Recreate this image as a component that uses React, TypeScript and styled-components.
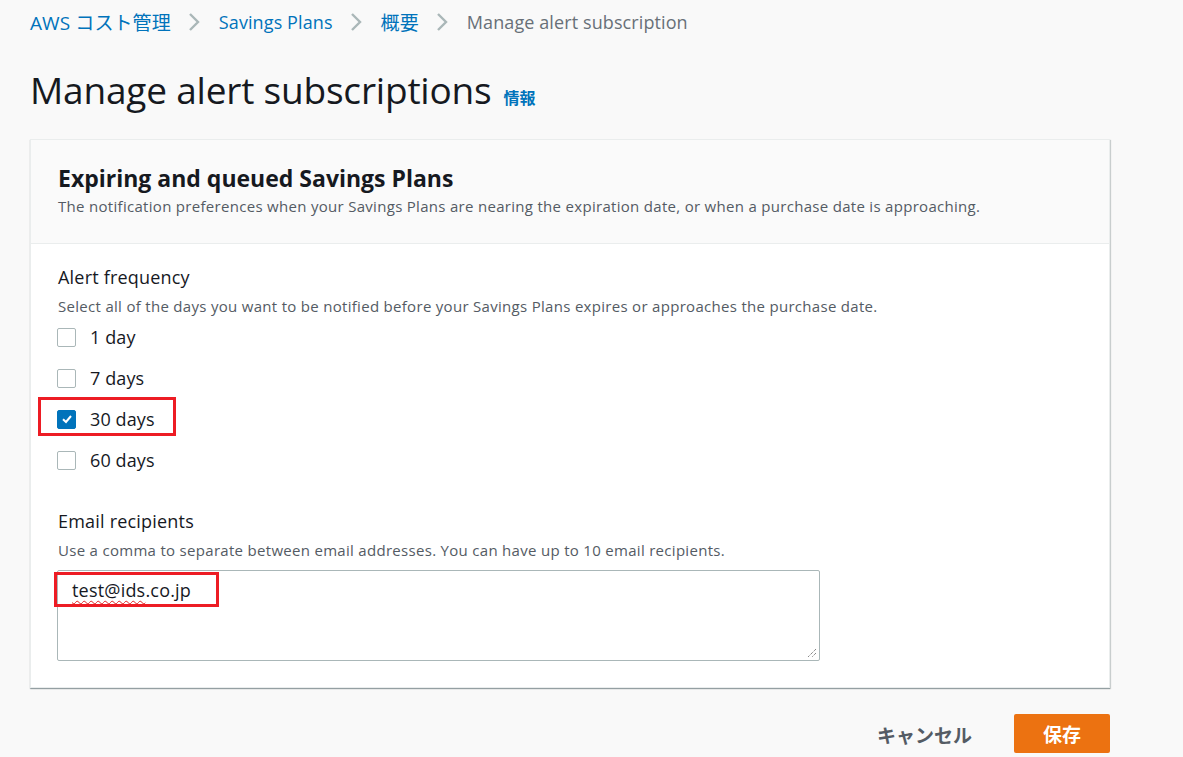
import React from "react";
import styled, { createGlobalStyle } from "styled-components";

const Global = createGlobalStyle`
  html, body { margin: 0; padding: 0; background: #f9f9f9; }
  body { font-family: "Open Sans", "Noto Sans CJK JP", sans-serif; color: #16191f; }
`;

const Page = styled.div`
  width: 1183px;
  height: 757px;
  box-sizing: border-box;
  padding: 0 73px 0 30px;
  display: flex;
  flex-direction: column;
  overflow: hidden;
`;

const Breadcrumbs = styled.nav`
  display: flex;
  align-items: center;
  height: 44px;
  font-size: 18px;
  letter-spacing: 0.1px;
`;

const Crumb = styled.span<{ $current?: boolean; $jp?: boolean }>`
  color: ${(p) => (p.$current ? "#687078" : "#0073bb")};
  font-size: ${(p) => (p.$jp ? "19px" : "18px")};
`;

const Chevron = styled.span`
  display: flex;
  align-items: center;
  margin: 0 19px 0 17px;
  color: #aab7b8;
`;

const TitleRow = styled.div`
  display: flex;
  align-items: baseline;
  margin-top: 20px;
  height: 52px;
`;

const Title = styled.h1`
  margin: 0;
  font-size: 37px;
  font-weight: 400;
  line-height: 52px;
  color: #16191f;
  letter-spacing: -0.2px;
`;

const Info = styled.a`
  margin-left: 12px;
  font-size: 16px;
  font-weight: 700;
  color: #0073bb;
  font-family: "Noto Sans CJK JP", sans-serif;
`;

const Card = styled.section`
  margin-top: 23px;
  background: #fff;
  border: 1px solid #eaeded;
  box-shadow: 0 1px 1px 0 rgba(0, 28, 36, 0.3), 1px 1px 1px 0 rgba(0, 28, 36, 0.15);
  height: 549px;
  box-sizing: border-box;
  display: flex;
  flex-direction: column;
`;

const CardHeader = styled.header`
  background: #fafafa;
  border-bottom: 1px solid #eaeded;
  padding: 23px 27px 0 27px;
  height: 104px;
  box-sizing: border-box;
`;

const CardTitle = styled.h2`
  margin: 0;
  font-size: 23px;
  font-weight: 700;
  line-height: 30px;
  color: #16191f;
`;

const Desc = styled.p`
  margin: 0;
  font-size: 15px;
  letter-spacing: 0.3px;
  line-height: 22px;
  color: #545b64;
`;

const HeaderDesc = styled(Desc)`
  margin-top: 2px;
`;

const CardBody = styled.div`
  padding: 21px 27px 0 27px;
  display: flex;
  flex-direction: column;
`;

const Label = styled.div`
  font-size: 18px;
  letter-spacing: 0.2px;
  line-height: 24px;
  color: #16191f;
`;

const Field = styled.div<{ $gap?: number }>`
  display: flex;
  flex-direction: column;
  margin-top: ${(p) => p.$gap ?? 0}px;
`;

const FieldDesc = styled(Desc)`
  margin-top: 6px;
`;

const CheckList = styled.div`
  display: flex;
  flex-direction: column;
  margin-top: 9px;
  gap: 19px;
`;

const CheckRow = styled.label`
  position: relative;
  display: flex;
  align-items: center;
  gap: 14px;
  height: 22px;
  font-size: 18px;
  letter-spacing: 0.1px;
  color: #16191f;
`;

const Box = styled.span<{ $checked?: boolean }>`
  width: 17px;
  height: 17px;
  margin-left: -1px;
  border-radius: 2px;
  border: 1px solid ${(p) => (p.$checked ? "#0073bb" : "#aab7b8")};
  background: ${(p) => (p.$checked ? "#0073bb" : "#fff")};
  display: flex;
  align-items: center;
  justify-content: center;
`;

const Highlight = styled.span`
  position: absolute;
  border: 3px solid #ed1c24;
  box-sizing: border-box;
  pointer-events: none;
`;

const TextArea = styled.div`
  position: relative;
  margin-top: 9px;
  width: 763px;
  height: 91px;
  margin-left: -1px;
  box-sizing: border-box;
  border: 1px solid #aab7b8;
  border-radius: 2px;
  background: #fff;
  padding: 7px 14px;
  font-size: 18px;
  letter-spacing: 0.2px;
  line-height: 24px;
  color: #16191f;
`;

const Squiggle = styled.span`
  text-decoration: underline wavy #e02020;
  text-decoration-thickness: 1px;
  text-underline-offset: 3px;
`;

const Grip = styled.svg`
  position: absolute;
  right: 2px;
  bottom: 2px;
`;

const Footer = styled.div`
  display: flex;
  justify-content: flex-end;
  align-items: center;
  margin-top: 26px;
  gap: 42px;
`;

const CancelButton = styled.button`
  background: none;
  border: none;
  font-family: "Noto Sans CJK JP", sans-serif;
  font-weight: 700;
  font-size: 19px;
  color: #545b64;
  padding: 0;
  margin-top: 2px;
`;

const PrimaryButton = styled.button`
  width: 96px;
  height: 39px;
  background: #ec7211;
  border: none;
  border-radius: 2px;
  color: #fff;
  font-family: "Noto Sans CJK JP", sans-serif;
  font-weight: 700;
  font-size: 19px;
`;

const ChevronIcon = () => (
  <svg width="12" height="20" viewBox="0 0 12 20">
    <path d="M2 2 L10 10 L2 18" fill="none" stroke="currentColor" strokeWidth="2.4" />
  </svg>
);

const days = [
  { label: "1 day", checked: false },
  { label: "7 days", checked: false },
  { label: "30 days", checked: true },
  { label: "60 days", checked: false },
];

export default function App() {
  return (
    <>
      <Global />
      <Page>
        <Breadcrumbs>
          <Crumb $jp>AWS コスト管理</Crumb>
          <Chevron><ChevronIcon /></Chevron>
          <Crumb>Savings Plans</Crumb>
          <Chevron><ChevronIcon /></Chevron>
          <Crumb $jp>概要</Crumb>
          <Chevron><ChevronIcon /></Chevron>
          <Crumb $current>Manage alert subscription</Crumb>
        </Breadcrumbs>
        <TitleRow>
          <Title>Manage alert subscriptions</Title>
          <Info>情報</Info>
        </TitleRow>
        <Card>
          <CardHeader>
            <CardTitle>Expiring and queued Savings Plans</CardTitle>
            <HeaderDesc>
              The notification preferences when your Savings Plans are nearing the expiration date, or when a purchase date is approaching.
            </HeaderDesc>
          </CardHeader>
          <CardBody>
            <Field>
              <Label>Alert frequency</Label>
              <FieldDesc>
                Select all of the days you want to be notified before your Savings Plans expires or approaches the purchase date.
              </FieldDesc>
              <CheckList>
                {days.map((d) => (
                  <CheckRow key={d.label}>
                    <Box $checked={d.checked}>
                      {d.checked && (
                        <svg width="12" height="12" viewBox="0 0 12 12">
                          <path d="M2 6.2 L5 9 L10 3" fill="none" stroke="#fff" strokeWidth="2" />
                        </svg>
                      )}
                    </Box>
                    {d.label}
                    {d.checked && (
                      <Highlight style={{ left: -20, top: -11, width: 138, height: 39 }} />
                    )}
                  </CheckRow>
                ))}
              </CheckList>
            </Field>
            <Field $gap={38}>
              <Label>Email recipients</Label>
              <FieldDesc>
                Use a comma to separate between email addresses. You can have up to 10 email recipients.
              </FieldDesc>
              <TextArea>
                <Squiggle>test@ids</Squiggle>.co.jp
                <Highlight style={{ left: -4, top: 1, width: 165, height: 35 }} />
                <Grip width="10" height="10" viewBox="0 0 10 10">
                  <path d="M9 1 L1 9 M9 5 L5 9" stroke="#555" strokeWidth="1" strokeDasharray="1 1" />
                </Grip>
              </TextArea>
            </Field>
          </CardBody>
        </Card>
        <Footer>
          <CancelButton>キャンセル</CancelButton>
          <PrimaryButton>保存</PrimaryButton>
        </Footer>
      </Page>
    </>
  );
}
